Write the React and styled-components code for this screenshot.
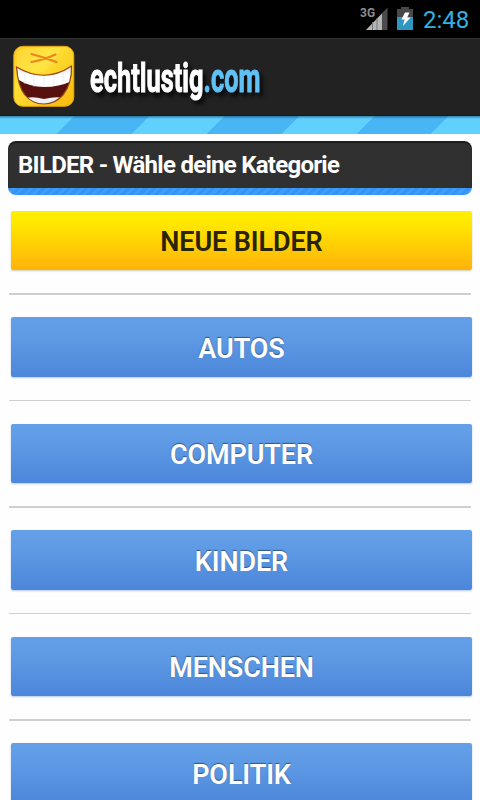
import React from 'react';
import styled, { createGlobalStyle, css } from 'styled-components';

const GlobalStyle = createGlobalStyle`
  * {
    box-sizing: border-box;
  }

  body {
    margin: 0;
    background: #fefefe;
    font-family: Roboto, 'Liberation Sans', sans-serif;
  }
`;

const Screen = styled.div`
  width: 480px;
  height: 800px;
  overflow: hidden;
  background: #fefefe;
`;

const StatusBar = styled.div`
  display: flex;
  align-items: center;
  justify-content: flex-end;
  height: 38px;
  padding-right: 9px;
  background: #000;
`;

const Clock = styled.span`
  width: 48px;
  margin-left: 1px;
  padding-top: 2px;
  color: #35b1e1;
  font-size: 24px;
  line-height: 36px;
  white-space: nowrap;
`;

const Header = styled.header`
  display: flex;
  height: 78px;
  padding-left: 8px;
  background: #222;
  border-top: 1px solid #323232;
  border-bottom: 1px solid #141b20;
`;

const Stripes = styled.div`
  height: 18px;
  background:
    linear-gradient(rgba(20, 50, 75, 0.5), rgba(20, 50, 75, 0) 3px),
    repeating-linear-gradient(135deg, #60d0ff 0 52.9px, #48b5f4 52.9px 105.8px);
`;

const Content = styled.main`
  padding: 7px 8px 0;
`;

const TitleBar = styled.h1`
  height: 54px;
  margin: 0 0 15.7px;
  padding: 0 10px;
  border-radius: 8px;
  background:
    repeating-linear-gradient(135deg, #3294f8 0 3px, #3f9df8 3px 6px) 0 100% / 100% 7px no-repeat,
    #303030;
  box-shadow: inset 0 2px 1px #1c1c1c;
  color: #fff;
  font-size: 24px;
  font-weight: 700;
  line-height: 48px;
  letter-spacing: -0.73px;
  white-space: nowrap;
`;

const CategoryList = styled.ul`
  margin: 0;
  padding: 0;
  list-style: none;
`;

const Category = styled.li`
  height: 106.5px;
`;

const Divider = styled.hr`
  width: 462px;
  height: 1.5px;
  margin: 23.1px 0 0 1px;
  border: 0;
  background: #cfcfcf;
`;

const CategoryButton = styled.button`
  display: block;
  width: 461px;
  height: 59.5px;
  margin: 0 0 0 3px;
  padding: 3.5px 0 0;
  border: 0;
  border-radius: 2px;
  font-family: inherit;
  font-size: 27px;
  font-weight: 600;
  line-height: 56px;
  letter-spacing: -0.1px;
  text-align: center;

  ${({ $highlight }) =>
    $highlight
      ? css`
          background: linear-gradient(#ffef00, #ffe800 20%, #ffb20a);
          box-shadow: 0 1px 2px #cfcbb0;
          color: #292408;
        `
      : css`
          background: linear-gradient(#64a0e8, #5f9be5 30%, #4c86da);
          box-shadow: 0 1px 2px #b5c9e6;
          color: #fff;
          text-shadow: 0 -1px 1px #36567f;
        `}
`;

const SignalIcon = () => (
  <svg width="30" height="38" viewBox="358 0 30 38">
    <text x="360" y="17" fill="#8c8c8c" fontSize="12" fontWeight="700">
      3G
    </text>
    <path d="M366 30 387.500 7.500V30Z" fill="#4b4b4b" />
    <path d="M366 30 382 13.500V30Z" fill="#b5b5b5" />
    <path d="M372.500 22V30M377 18V30" stroke="#777" strokeWidth="1" />
  </svg>
);

const BatteryIcon = () => (
  <svg width="34" height="38" viewBox="388 0 34 38">
    <path d="M401 7h8v2h4v8h-16V9h4Z" fill="#484848" />
    <path d="M397 17h16v13h-16Z" fill="#2f96bf" />
    <path d="M405 12.500h4.500l-2.300 5h3.300l-7.500 8.500 1.600-6.500h-3.200Z" fill="#fff" />
  </svg>
);

const LaughingLogo = () => (
  <svg width="72" height="76" viewBox="8 39 72 76">
    <defs>
      <linearGradient id="face" x1="0" y1="0" x2="1" y2="1">
        <stop offset="0" stopColor="#ffc81c" />
        <stop offset="0.35" stopColor="#ffe136" />
        <stop offset="1" stopColor="#f9b90e" />
      </linearGradient>
      <linearGradient id="teeth" x1="0" y1="0" x2="0" y2="1">
        <stop offset="0" stopColor="#d9dbe2" />
        <stop offset="0.5" stopColor="#fff" />
      </linearGradient>
      <clipPath id="mouth">
        <path d="M16.500 67Q45 84 71.500 66Q72 84 63 95Q55 104 44 104Q32 104 25 95Q18 87 16.500 67Z" />
      </clipPath>
    </defs>
    <rect x="13.800" y="46.300" width="60" height="60" rx="9" fill="url(#face)" stroke="#e9a313" strokeWidth="1" />
    <path d="M17 56Q18 49 26 48.500H61Q55 64 43 72Q29 73 17 66Z" fill="#ffed68" opacity="0.3" />
    <path d="M31.500 54Q43 57 56.500 62M31.500 62Q43 60 55.500 54.500" fill="none" stroke="#ed8420" strokeWidth="2.200" strokeLinecap="round" />
    <g clipPath="url(#mouth)">
      <rect x="14" y="64" width="60" height="42" fill="#57120f" />
      <path d="M14 64H74V80Q60 87 44 87Q30 87 17 79Z" fill="url(#teeth)" />
      <path d="M25 72V84M34 75V87M44 76V87M54 75V86M63 72V83" stroke="#dedee3" strokeWidth="0.600" />
      <path d="M26 98Q33 96 44 99Q56 96 63 98V106H26Z" fill="#eef0f5" />
    </g>
    <path
      d="M16.500 67Q45 84 71.500 66Q72 84 63 95Q55 104 44 104Q32 104 25 95Q18 87 16.500 67Z"
      fill="none"
      stroke="#9b4713"
      strokeWidth="1.200"
    />
  </svg>
);

const WordmarkSvg = styled.svg`
  margin-left: 4px;
  font-weight: 700;
  filter: drop-shadow(3px 4px 2px #080808);
`;

const Wordmark = () => (
  <WordmarkSvg width="190" height="76" viewBox="84 39 190 76">
    <text transform="translate(90 92) scale(0.635 1)" fontSize="40" fill="#fff" stroke="#fff" strokeWidth="1">
      echtlustig
      <tspan fill="#5fc1f5" stroke="#5fc1f5">.com</tspan>
    </text>
  </WordmarkSvg>
);

const categories = [
  { name: 'NEUE BILDER', highlight: true },
  { name: 'AUTOS' },
  { name: 'COMPUTER' },
  { name: 'KINDER' },
  { name: 'MENSCHEN' },
  { name: 'POLITIK' },
];

const App = () => (
  <>
    <GlobalStyle />
    <Screen>
      <StatusBar>
        <SignalIcon />
        <BatteryIcon />
        <Clock>2:48</Clock>
      </StatusBar>
      <Header>
        <LaughingLogo />
        <Wordmark />
      </Header>
      <Stripes />
      <Content>
        <TitleBar>BILDER - Wähle deine Kategorie</TitleBar>
        <CategoryList>
          {categories.map(({ name, highlight }) => (
            <Category key={name}>
              <CategoryButton $highlight={highlight}>{name}</CategoryButton>
              <Divider />
            </Category>
          ))}
        </CategoryList>
      </Content>
    </Screen>
  </>
);

export default App;
